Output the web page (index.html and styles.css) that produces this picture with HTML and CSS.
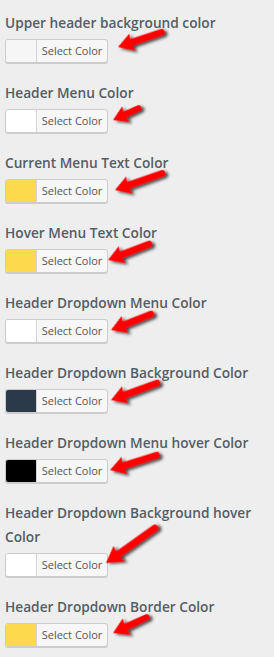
FILE: index.html
```html
<!DOCTYPE html>
<html lang="en">
<head>
    <meta charset="UTF-8">
    <title>Header Colors</title>
    <link rel="stylesheet" href="styles.css">
</head>
<body>
    <svg class="defs" width="0" height="0">
        <defs>
            <filter id="shade" x="-30%" y="-60%" width="160%" height="220%">
                <feDropShadow dx="2" dy="2.5" stdDeviation="1.6" flood-color="#000" flood-opacity="0.75"/>
            </filter>
        </defs>
    </svg>

    <div class="panel">
        <div class="field">
            <span class="field-title">Upper header background color</span>
            <button class="color-btn"><span class="swatch" style="background:#f6f6f6"></span><span class="btn-text">Select Color</span></button>
            <svg class="pointer"><path filter="url(#shade)" transform="translate(113,37) rotate(-18.8)" d="M0 0 L15 -9 L14 -3.5 L46 -3.2 A3.2 3.2 0 0 1 46 3.2 L14 3.5 L15 9 Z"/></svg>
        </div>

        <div class="field">
            <span class="field-title">Header Menu Color</span>
            <button class="color-btn"><span class="swatch" style="background:#ffffff"></span><span class="btn-text">Select Color</span></button>
            <svg class="pointer"><path filter="url(#shade)" transform="translate(108,40) rotate(-24.8)" d="M0 0 L14 -8.5 L13 -3.2 L28 -3 A3 3 0 0 1 28 3 L13 3.2 L14 8.5 Z"/></svg>
        </div>

        <div class="field">
            <span class="field-title">Current Menu Text Color</span>
            <button class="color-btn"><span class="swatch" style="background:#fdd94e"></span><span class="btn-text">Select Color</span></button>
            <svg class="pointer"><path filter="url(#shade)" transform="translate(110,40) rotate(-19.5)" d="M0 0 L15 -9 L14 -3.5 L50 -3.2 A3.2 3.2 0 0 1 50 3.2 L14 3.5 L15 9 Z"/></svg>
        </div>

        <div class="field">
            <span class="field-title">Hover Menu Text Color</span>
            <button class="color-btn"><span class="swatch" style="background:#fdd94e"></span><span class="btn-text">Select Color</span></button>
            <svg class="pointer"><path filter="url(#shade)" transform="translate(103,40) rotate(-21.3)" d="M0 0 L15 -9 L14 -3.5 L44 -3.2 A3.2 3.2 0 0 1 44 3.2 L14 3.5 L15 9 Z"/></svg>
        </div>

        <div class="field">
            <span class="field-title">Header Dropdown Menu Color</span>
            <button class="color-btn"><span class="swatch" style="background:#ffffff"></span><span class="btn-text">Select Color</span></button>
            <svg class="pointer"><path filter="url(#shade)" transform="translate(106,40) rotate(-21.8)" d="M0 0 L15 -9 L14 -3.5 L43 -3.2 A3.2 3.2 0 0 1 43 3.2 L14 3.5 L15 9 Z"/></svg>
        </div>

        <div class="field">
            <span class="field-title">Header Dropdown Background Color</span>
            <button class="color-btn"><span class="swatch" style="background:#2b3a4a"></span><span class="btn-text">Select Color</span></button>
            <svg class="pointer"><path filter="url(#shade)" transform="translate(106,40) rotate(-20.3)" d="M0 0 L15 -9 L14 -3.5 L49 -3.2 A3.2 3.2 0 0 1 49 3.2 L14 3.5 L15 9 Z"/></svg>
        </div>

        <div class="field">
            <span class="field-title">Header Dropdown Menu hover Color</span>
            <button class="color-btn"><span class="swatch" style="background:#000000"></span><span class="btn-text">Select Color</span></button>
            <svg class="pointer"><path filter="url(#shade)" transform="translate(105,40) rotate(-17.7)" d="M0 0 L15 -9 L14 -3.5 L49 -3.2 A3.2 3.2 0 0 1 49 3.2 L14 3.5 L15 9 Z"/></svg>
        </div>

        <div class="field">
            <span class="field-title">Header Dropdown Background hover Color</span>
            <button class="color-btn"><span class="swatch" style="background:#ffffff"></span><span class="btn-text">Select Color</span></button>
            <svg class="pointer tall"><path filter="url(#shade)" transform="translate(101,63) rotate(-35.5)" d="M0 0 L16 -9.5 L15 -3.6 L60 -3.4 A3.4 3.4 0 0 1 60 3.4 L15 3.6 L16 9.5 Z"/></svg>
        </div>

        <div class="field">
            <span class="field-title">Header Dropdown Border Color</span>
            <button class="color-btn"><span class="swatch" style="background:#fdd94e"></span><span class="btn-text">Select Color</span></button>
            <svg class="pointer"><path filter="url(#shade)" transform="translate(108,39) rotate(-25.2)" d="M0 0 L15 -9 L14 -3.4 L37 -3.1 A3.1 3.1 0 0 1 37 3.1 L14 3.4 L15 9 Z"/></svg>
        </div>
    </div>
</body>
</html>
```

FILE: styles.css
```css
html, body {
    background: #eeeeee;
}
body {
    margin: 0;
    font-family: "Open Sans", "Noto Sans", sans-serif;
}
.defs {
    position: absolute;
}
.panel {
    display: flex;
    flex-direction: column;
    gap: 6px;
    padding: 11px 4px 0 5px;
}
.field {
    position: relative;
    display: flex;
    flex-direction: column;
    align-items: flex-start;
    gap: 4px;
    padding-bottom: 12px;
}
.field-title {
    font-size: 13.7px;
    font-weight: 600;
    line-height: 24px;
    color: #555d66;
}
.color-btn {
    display: flex;
    align-items: stretch;
    box-sizing: border-box;
    height: 24px;
    width: 103px;
    padding: 0;
    margin: 0;
    border: 1px solid #cccccc;
    border-radius: 3px;
    background: #f7f7f7;
    box-shadow: 0 1px 0 #cccccc;
    overflow: hidden;
    font-family: inherit;
}
.swatch {
    width: 30px;
    border-right: 1px solid #d4d4d4;
}
.btn-text {
    flex: 1;
    font-size: 11px;
    line-height: 22px;
    color: #555555;
    text-align: center;
}
.pointer {
    position: absolute;
    left: 0;
    top: -1px;
    width: 274px;
    height: 70px;
    overflow: visible;
    pointer-events: none;
}
.pointer.tall {
    height: 94px;
}
.pointer path {
    fill: #ff0000;
}
```
